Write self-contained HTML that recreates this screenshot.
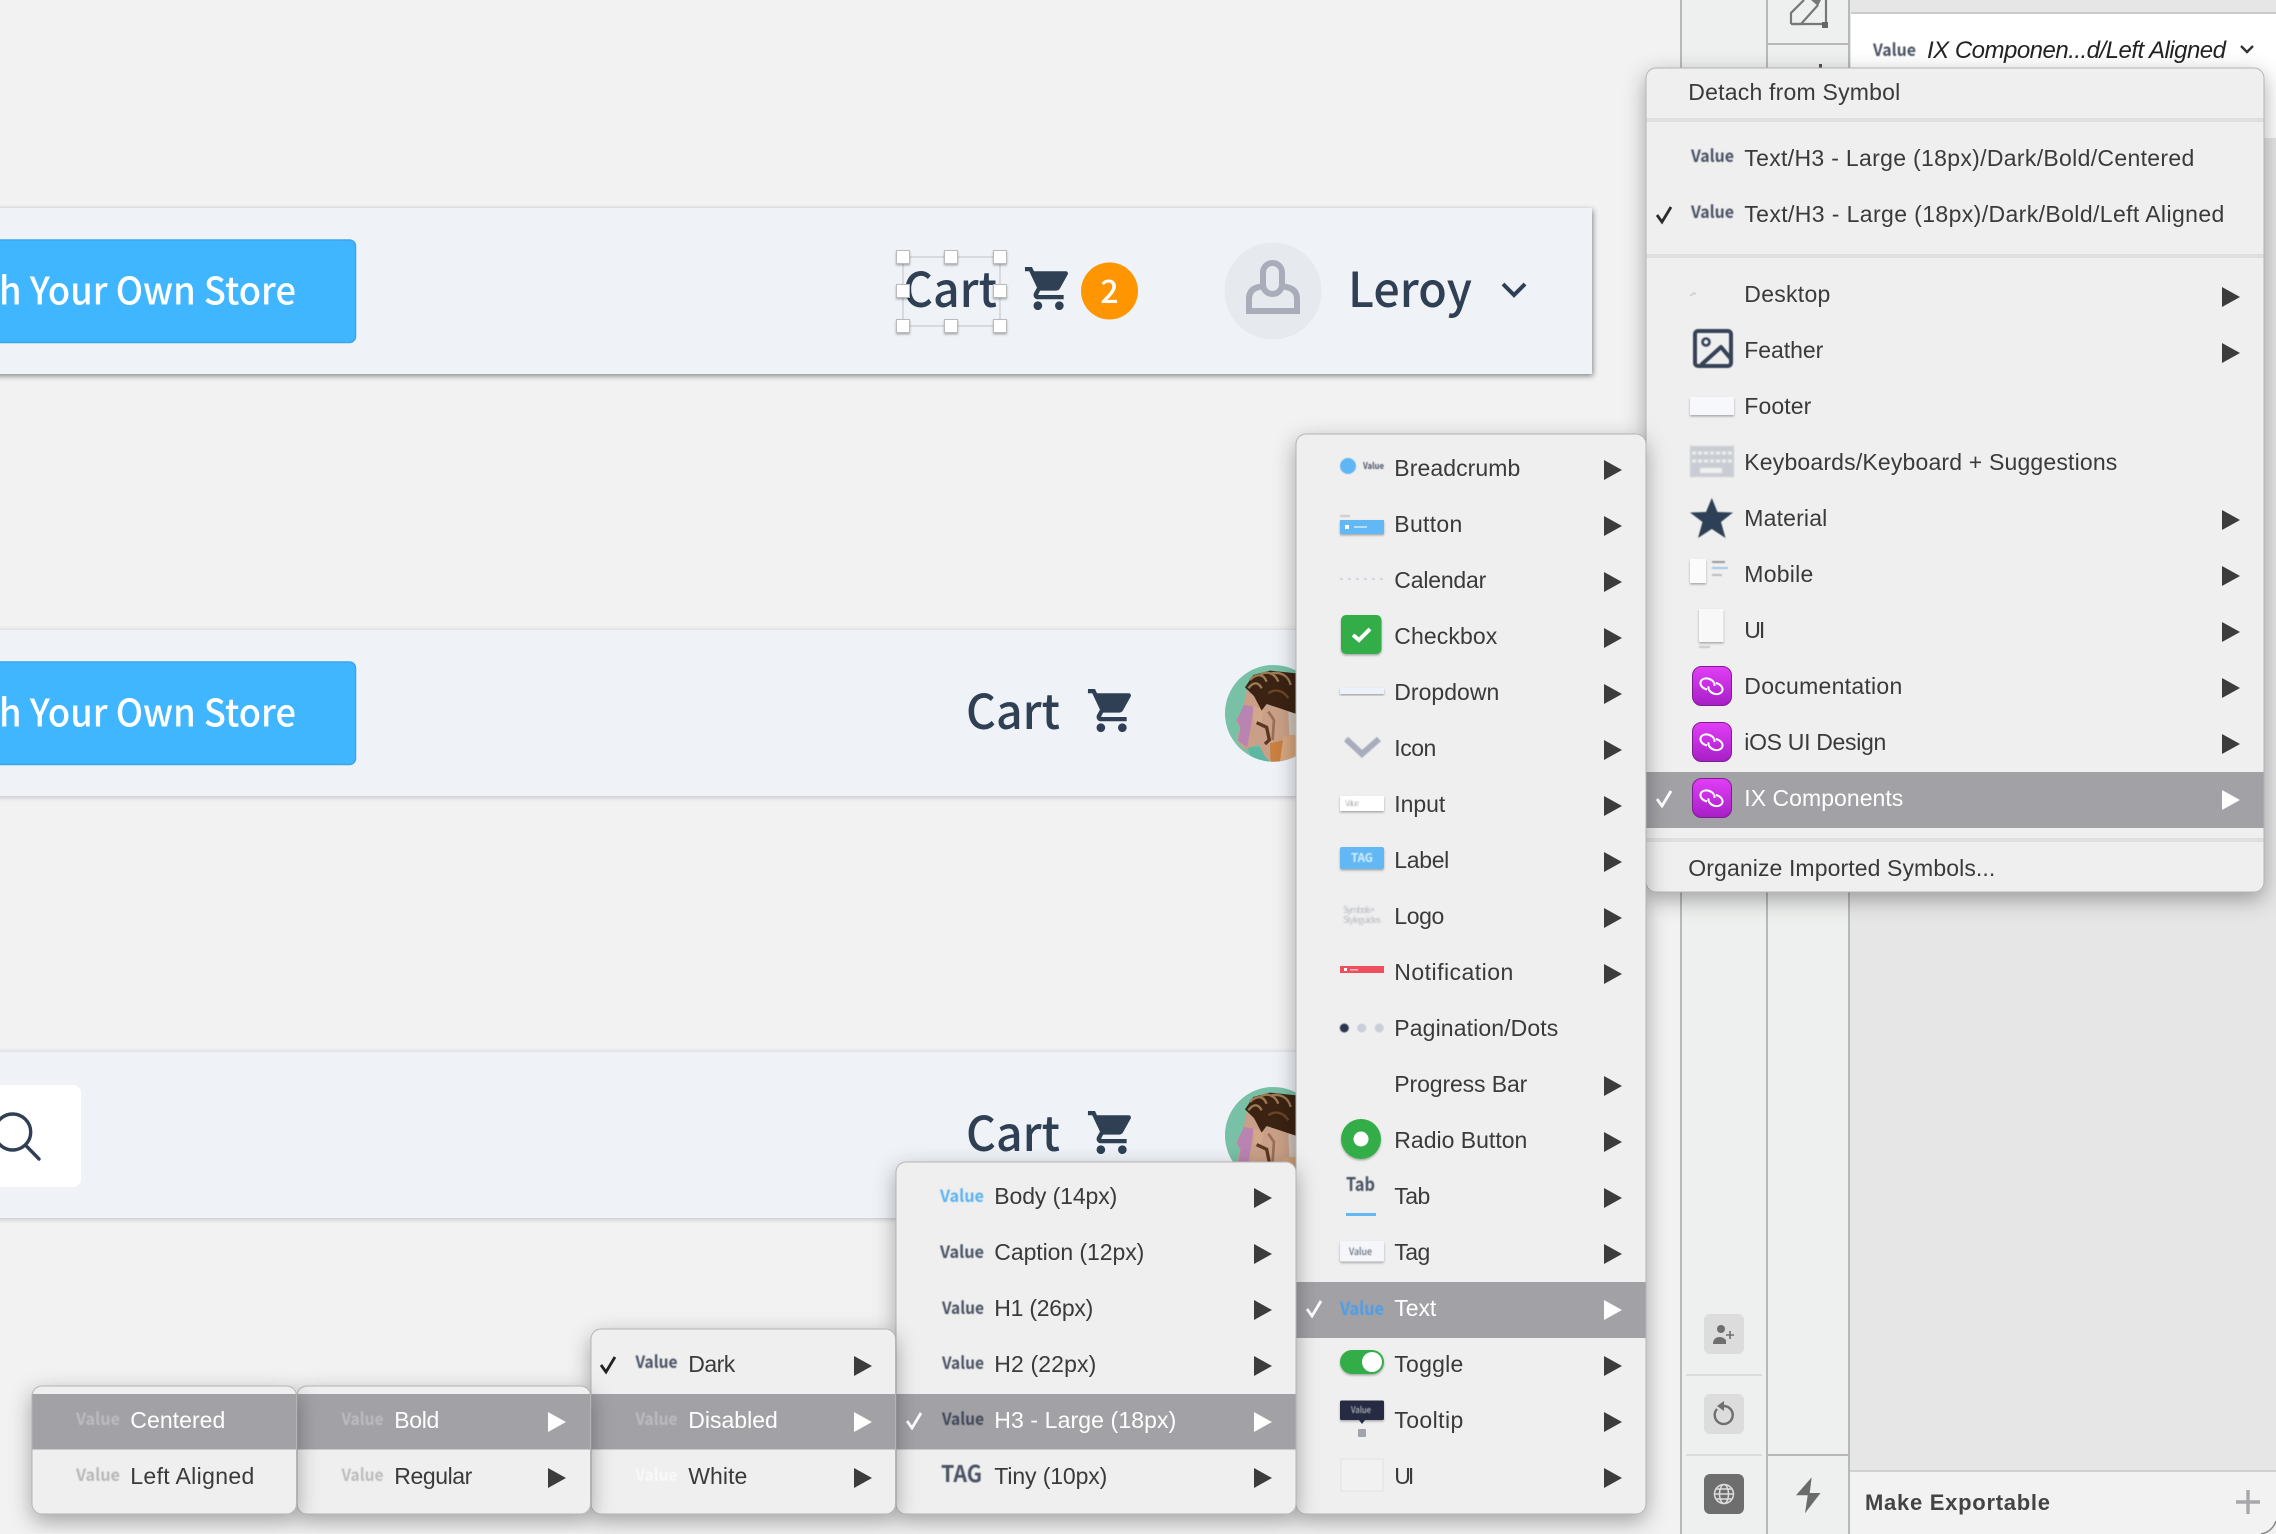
<!DOCTYPE html>
<html lang="en"><head><meta charset="utf-8"><title>Symbol override menus</title>
<style>
html,body{margin:0;padding:0;background:#f2f2f2;overflow:hidden}
svg{display:block}
.m{font:23px "Liberation Sans",sans-serif;fill:#3a3a3a;transform:translateX(-.7px)}
.w{fill:#fff}
.v{font:bold 17px "Noto Sans CJK SC","Liberation Sans",sans-serif;fill:#4a5264;filter:url(#bl)}
.n{font-family:"Noto Sans CJK SC","Liberation Sans",sans-serif;font-weight:500;fill:#2f3f54}
.t{fill:#3c3c3c}
</style></head><body>
<svg xmlns="http://www.w3.org/2000/svg" width="2276" height="1534" viewBox="0 0 2276 1534">
<defs>
<filter id="bl" x="-20%" y="-30%" width="140%" height="160%"><feGaussianBlur stdDeviation=".6"/></filter>
<filter id="bl2" x="-20%" y="-40%" width="140%" height="180%"><feGaussianBlur stdDeviation=".9"/></filter>
<filter id="bl3" x="-5%" y="-5%" width="110%" height="110%"><feGaussianBlur stdDeviation="3"/></filter>
<filter id="ms" x="-15%" y="-15%" width="130%" height="130%"><feDropShadow dx="0" dy="7" stdDeviation="11" flood-color="#000" flood-opacity=".33"/></filter>
<filter id="bs1" x="-2%" y="-10%" width="104%" height="125%"><feDropShadow dx="1" dy="2" stdDeviation="3" flood-color="#000" flood-opacity=".45"/></filter>
<filter id="bs2" x="-2%" y="-10%" width="104%" height="125%"><feDropShadow dx="0" dy="1" stdDeviation="3" flood-color="#000" flood-opacity=".22"/></filter>
<filter id="is" x="-20%" y="-20%" width="140%" height="150%"><feDropShadow dx="0" dy="1.5" stdDeviation="1" flood-color="#000" flood-opacity=".3"/></filter>
<linearGradient id="pg" x1="0" y1="0" x2="0" y2="1"><stop offset="0" stop-color="#e23ef6"/><stop offset="1" stop-color="#a61fc6"/></linearGradient>
<polygon id="a" points="0,-10 18,0 0,10"/>
<path id="cart" d="M7 18c-1.1 0-1.99.9-1.99 2S5.9 22 7 22s2-.9 2-2-.9-2-2-2zM1 2v2h2l3.6 7.59-1.35 2.45c-.16.28-.25.61-.25.96 0 1.1.9 2 2 2h12v-2H7.42c-.14 0-.25-.11-.25-.25l.03-.12.9-1.63h7.45c.75 0 1.41-.41 1.75-1.03l3.58-6.49c.08-.14.12-.31.12-.48 0-.55-.45-1-1-1H5.21l-.94-2H1zm16 16c-1.1 0-1.99.9-1.99 2s.89 2 1.99 2 2-.9 2-2-.9-2-2-2z"/>
<g id="run"><rect x=".5" y=".5" width="39" height="39" rx="9" fill="url(#pg)" stroke="#7d1c93"/>
<g fill="none" stroke="#fff" stroke-width="2"><ellipse cx="15.5" cy="18" rx="7.2" ry="5.4" transform="rotate(18 15.5 18)" pathLength="100" stroke-dasharray="78 22" stroke-dashoffset="-22"/><ellipse cx="23.5" cy="22.5" rx="7.2" ry="5.4" transform="rotate(18 23.5 22.5)" pathLength="100" stroke-dasharray="50 22 28 0"/></g></g>
<clipPath id="ac"><circle cx="1120" cy="220" r="145"/></clipPath>
<g id="av"><circle cx="1120" cy="220" r="145" fill="#78c0a6"/>
<g clip-path="url(#ac)">
<polygon points="1040,320 1060,365 1110,366 1090,320" fill="#5eb6a4"/>
<polygon points="1040,150 1030,200 1008,242 1020,262 1010,300 1035,330 1075,312 1095,350 1112,366 1270,366 1270,210 1100,195" fill="#c9a087"/>
<polygon points="1032,195 1060,200 1056,240 1042,322 1014,302 1022,262 1010,242" fill="#b983b2"/>
<polygon points="1060,200 1090,205 1085,245 1062,250" fill="#d3a78c"/>
<polygon points="1110,310 1150,300 1140,366 1112,366" fill="#c9803f"/>
<polygon points="1150,290 1187,280 1187,366 1140,366" fill="#d7a77f"/>
<path d="M1070 248L1100 262L1108 300L1095 312" fill="none" stroke="#5b3623" stroke-width="10"/>
<path d="M1105 215L1122 240L1118 300" fill="none" stroke="#9b6e52" stroke-width="8"/>
<polygon points="1165,215 1190,205 1190,285 1168,285" fill="#cfc6bb"/>
<polygon points="1035,142 1060,105 1110,92 1190,100 1190,222 1140,205 1100,192 1085,212 1062,168" fill="#3b2212"/>
<path d="M1050 120C1070 100 1090 100 1100 125M1080 105C1100 92 1125 98 1135 125M1115 100C1140 95 1165 105 1172 135M1045 145C1060 125 1075 125 1085 145" fill="none" stroke="#9c7a55" stroke-width="7"/>
<path d="M1105 160C1125 145 1150 150 1165 175" fill="none" stroke="#6b452a" stroke-width="7"/>
</g></g>
</defs>

<rect width="2276" height="1534" fill="#f2f2f2"/>

<!-- right inspector behind menus -->
<rect x="1681" y="0" width="168" height="1534" fill="#eef0ef"/>
<rect x="1849" y="0" width="427" height="1534" fill="#e6e6e6"/>
<rect x="1680" y="0" width="2" height="1534" fill="#b8b8b8"/>
<rect x="1766" y="0" width="2" height="1534" fill="#b8b8b8"/>
<rect x="1848" y="0" width="2" height="1534" fill="#b8b8b8"/>
<rect x="1768" y="43" width="80" height="2" fill="#b8b8b8"/>
<rect x="1851" y="14" width="425" height="124" fill="#fff"/>
<rect x="1851" y="12" width="425" height="2" fill="#cbcbcb"/>
<g fill="none" stroke="#777" stroke-width="2.2"><path d="M1826 0V24H1793"/><path d="M1791 24V13L1804 0M1791 24H1801L1818 5"/></g>
<rect x="1822" y="22" width="6" height="6" fill="#666"/><polygon points="1811,0 1821,0 1818,6" fill="#777"/>
<rect x="1819" y="64" width="3" height="4" fill="#555"/>
<text x="1873" y="56" class="v" textLength="43" lengthAdjust="spacingAndGlyphs">Value</text>
<text x="1927" y="58" style="font:italic 24px 'Liberation Sans',sans-serif;fill:#222" textLength="299">IX Componen...d/Left Aligned</text>
<path d="M2241 46l6 6 6-6" fill="none" stroke="#333" stroke-width="2.4"/>

<rect x="1704" y="1314" width="40" height="40" rx="6" fill="#dcdcdc"/>
<circle cx="1721" cy="1329" r="4" fill="#6f6f6f"/><path d="M1713 1344c0-5 3-7 7-7 2 0 4 1 6 3v4z" fill="#6f6f6f"/><path d="M1730 1331v8M1726 1335h8" stroke="#6f6f6f" stroke-width="1.6"/>
<rect x="1704" y="1394" width="40" height="40" rx="6" fill="#dcdcdc"/>
<path d="M1717 1409a9 9 0 1 0 7-3" fill="none" stroke="#6f6f6f" stroke-width="2.4"/><polygon points="1724,1401 1724,1411 1717,1406" fill="#6f6f6f"/>
<rect x="1704" y="1474" width="40" height="40" rx="6" fill="#6e6e6e"/>
<g fill="none" stroke="#ddd" stroke-width="1.5"><circle cx="1724" cy="1494" r="9.5"/><ellipse cx="1724" cy="1494" rx="4.5" ry="9.5"/><path d="M1714.5 1494h19M1716 1489h16M1716 1499h16"/></g>
<rect x="1686" y="1374" width="76" height="2" fill="#dcdcdc"/><rect x="1686" y="1454" width="76" height="2" fill="#dcdcdc"/>
<rect x="1768" y="1454" width="80" height="2" fill="#b8b8b8"/>
<polygon points="1811.7,1477.4 1796,1495.3 1807.7,1495.3 1805,1513.3 1820.5,1493 1809.7,1493" fill="#6b6b6b"/>
<rect x="1850" y="1471" width="426" height="63" fill="#f2f2f2"/><rect x="1850" y="1470" width="426" height="2" fill="#d0d0d0"/>
<text x="1865" y="1510" style="font:bold 22px 'Liberation Sans',sans-serif;fill:#444" textLength="185">Make Exportable</text>
<path d="M2248 1490v24M2236 1502h24" stroke="#a8a8aa" stroke-width="3.4"/>
<path d="M2261 1534Q2272 1532 2276 1521" fill="none" stroke="#888" stroke-width="1.5"/>

<!-- band 1 -->
<rect x="-20" y="208" width="1612" height="166" fill="#eff3f8" filter="url(#bs1)"/>
<rect x="-20" y="240" width="375.5" height="102.5" rx="6" fill="#3fb6ff" stroke="#3aa6ea" stroke-width="1.5"/>
<text x="-1" y="304.5" class="n" style="font-size:38px;fill:#fff" textLength="297" lengthAdjust="spacingAndGlyphs">h Your Own Store</text>
<rect x="903" y="257" width="97" height="69" fill="none" stroke="#c9cbce" stroke-width="1.2"/>
<text x="903" y="307" class="n" style="font-size:48px" textLength="94" lengthAdjust="spacingAndGlyphs">Cart</text>
<g fill="#fff" stroke="#bbb" stroke-width="1" filter="url(#is)">
<rect x="896.5" y="250.5" width="13" height="13"/><rect x="944.5" y="250.5" width="13" height="13"/><rect x="993.5" y="250.5" width="13" height="13"/>
<rect x="896.5" y="284.5" width="13" height="13"/><rect x="993.5" y="284.5" width="13" height="13"/>
<rect x="896.5" y="319.5" width="13" height="13"/><rect x="944.5" y="319.5" width="13" height="13"/><rect x="993.5" y="319.5" width="13" height="13"/></g>
<use href="#cart" transform="translate(1022.8 262.7) scale(2.15)" fill="#2f3f54"/>
<circle cx="1109.5" cy="291" r="28.5" fill="#ff9500"/>
<text x="1109.5" y="303" class="n" style="font-size:32px;fill:#fff" text-anchor="middle">2</text>
<circle cx="1273" cy="291" r="48.5" fill="#e6e9ee"/>
<g fill="none" stroke="#a9adb9" stroke-width="6"><rect x="1263" y="263" width="19" height="31" rx="9.5"/><path d="M1263 286L1259 287Q1249 289 1249 299V311H1297V299Q1297 289 1286 287L1282 286"/></g>
<text x="1348" y="307" class="n" style="font-size:48px" textLength="124" lengthAdjust="spacingAndGlyphs">Leroy</text>
<path d="M1503 284l11 11 11-11" fill="none" stroke="#2f3f54" stroke-width="4"/>

<!-- band 2 -->
<rect x="-20" y="630" width="1500" height="166" fill="#eff3f8" filter="url(#bs2)"/>
<rect x="-20" y="662" width="375.5" height="102.5" rx="6" fill="#3fb6ff" stroke="#3aa6ea" stroke-width="1.5"/>
<text x="-1" y="726.5" class="n" style="font-size:38px;fill:#fff" textLength="297" lengthAdjust="spacingAndGlyphs">h Your Own Store</text>
<text x="966" y="729" class="n" style="font-size:48px" textLength="94" lengthAdjust="spacingAndGlyphs">Cart</text>
<use href="#cart" transform="translate(1085.8 684.7) scale(2.15)" fill="#2f3f54"/>
<use href="#av" transform="translate(900 640) scale(.3333)"/>

<!-- band 3 -->
<rect x="-20" y="1052" width="1500" height="166" fill="#eff3f8" filter="url(#bs2)"/>
<rect x="-20" y="1085" width="101" height="102" rx="8" fill="#fff"/>
<circle cx="12.7" cy="1132" r="18" fill="none" stroke="#2f3f54" stroke-width="3.4"/>
<path d="M26 1145.7L39 1159" stroke="#2f3f54" stroke-width="3.4" stroke-linecap="round"/>
<text x="966" y="1151" class="n" style="font-size:48px" textLength="94" lengthAdjust="spacingAndGlyphs">Cart</text>
<use href="#cart" transform="translate(1085.8 1106.7) scale(2.15)" fill="#2f3f54"/>
<use href="#av" transform="translate(900 1062) scale(.3333)"/>

<!-- MENU 1 -->
<rect x="1646" y="68" width="618" height="824" rx="10" fill="#efefef" stroke="#b4b4b4" stroke-width="1" filter="url(#ms)"/>
<rect x="1646.5" y="118" width="617" height="4" fill="#dedede"/>
<rect x="1646.5" y="254" width="617" height="4" fill="#dedede"/>
<rect x="1646.5" y="838" width="617" height="4" fill="#dedede"/>
<rect x="1646.5" y="772" width="617" height="56" fill="#a2a1a6"/>
<text x="1689" y="100" class="m" textLength="212">Detach from Symbol</text>
<text x="1691" y="162" class="v" textLength="43" lengthAdjust="spacingAndGlyphs">Value</text>
<text x="1745" y="166" class="m" textLength="450">Text/H3 - Large (18px)/Dark/Bold/Centered</text>
<path d="M1657 215l5 7 9-15" fill="none" stroke="#2b2b2b" stroke-width="2.8"/>
<text x="1691" y="218" class="v" textLength="43" lengthAdjust="spacingAndGlyphs">Value</text>
<text x="1745" y="222" class="m" textLength="480">Text/H3 - Large (18px)/Dark/Bold/Left Aligned</text>

<path d="M1690 296l4-3 2 1" fill="none" stroke="#ccc" stroke-width="1.5"/>
<text x="1745" y="302" class="m" textLength="86">Desktop</text><use href="#a" x="2222" y="297" class="t"/>
<g fill="none" stroke="#354255" stroke-width="4" stroke-linejoin="round" filter="url(#bl)"><rect x="1695" y="331" width="36" height="35" rx="3"/><path d="M1701 365L1721 347L1731 359"/><circle cx="1706" cy="342" r="3.5" stroke-width="2.6"/></g>
<text x="1745" y="358" class="m" textLength="79">Feather</text><use href="#a" x="2222" y="353" class="t"/>
<rect x="1690" y="397" width="44" height="18" fill="#f7f8fb" filter="url(#is)"/>
<text x="1745" y="414" class="m" textLength="67">Footer</text>
<g filter="url(#bl2)"><rect x="1690" y="446" width="44" height="31" fill="#c9cdd3"/><path d="M1692 453h40M1692 461h40" stroke="#eceef1" stroke-width="3" stroke-dasharray="4 2"/><rect x="1700" y="468" width="22" height="5" fill="#eef0f2"/></g>
<text x="1745" y="470" class="m" textLength="373">Keyboards/Keyboard + Suggestions</text>
<polygon points="1711.8,498 1717.5,512 1733,512.5 1721,522 1725.5,538 1711.8,529 1698,538 1702.5,522 1690,512.5 1706,512" fill="#2f3f54" filter="url(#bl)"/>
<text x="1745" y="526" class="m" textLength="83">Material</text><use href="#a" x="2222" y="520" class="t"/>
<rect x="1690" y="559" width="16" height="24" fill="#fbfbfb" filter="url(#is)"/><g filter="url(#bl)"><rect x="1712" y="561" width="13" height="2" fill="#999"/><rect x="1712" y="567" width="16" height="2" fill="#9cc8ea"/><rect x="1712" y="574" width="10" height="2" fill="#bbb"/></g>
<text x="1745" y="582" class="m" textLength="69">Mobile</text><use href="#a" x="2222" y="576" class="t"/>
<rect x="1699" y="609" width="24.5" height="33" fill="#f8f8f8" filter="url(#is)"/><rect x="1699" y="646" width="11" height="2" fill="#c8c8c8" filter="url(#bl)"/>
<text x="1745" y="638" class="m" textLength="21">UI</text><use href="#a" x="2222" y="632" class="t"/>
<use href="#run" x="1692" y="666"/>
<text x="1745" y="694" class="m" textLength="158">Documentation</text><use href="#a" x="2222" y="688" class="t"/>
<use href="#run" x="1692" y="722"/>
<text x="1745" y="750" class="m" textLength="142">iOS UI Design</text><use href="#a" x="2222" y="744" class="t"/>
<path d="M1657 799l5 7 9-15" fill="none" stroke="#fff" stroke-width="2.8"/>
<use href="#run" x="1692" y="778"/>
<text x="1745" y="806" class="m w" textLength="159">IX Components</text><use href="#a" x="2222" y="800" fill="#fff"/>
<text x="1689" y="876" class="m" textLength="307">Organize Imported Symbols...</text>

<!-- MENU 2 -->
<rect x="1296" y="434" width="350" height="1080" rx="10" fill="#efefef" stroke="#b4b4b4" stroke-width="1" filter="url(#ms)"/>
<rect x="1296.5" y="1282" width="349" height="56" fill="#a2a1a6"/>
<g class="t">
<use href="#a" x="1604" y="470"/><use href="#a" x="1604" y="526"/><use href="#a" x="1604" y="582"/><use href="#a" x="1604" y="638"/><use href="#a" x="1604" y="694"/><use href="#a" x="1604" y="750"/><use href="#a" x="1604" y="806"/><use href="#a" x="1604" y="862"/><use href="#a" x="1604" y="918"/><use href="#a" x="1604" y="974"/><use href="#a" x="1604" y="1086"/><use href="#a" x="1604" y="1142"/><use href="#a" x="1604" y="1198"/><use href="#a" x="1604" y="1254"/><use href="#a" x="1604" y="1366"/><use href="#a" x="1604" y="1422"/><use href="#a" x="1604" y="1478"/>
</g>
<use href="#a" x="1604" y="1310" fill="#fff"/>
<text x="1395" y="476" class="m" textLength="126">Breadcrumb</text>
<text x="1395" y="532" class="m" textLength="68">Button</text>
<text x="1395" y="588" class="m" textLength="92">Calendar</text>
<text x="1395" y="644" class="m" textLength="103">Checkbox</text>
<text x="1395" y="700" class="m" textLength="105">Dropdown</text>
<text x="1395" y="756" class="m" textLength="42">Icon</text>
<text x="1395" y="812" class="m" textLength="51">Input</text>
<text x="1395" y="868" class="m" textLength="55">Label</text>
<text x="1395" y="924" class="m" textLength="50">Logo</text>
<text x="1395" y="980" class="m" textLength="119">Notification</text>
<text x="1395" y="1036" class="m" textLength="164">Pagination/Dots</text>
<text x="1395" y="1092" class="m" textLength="133">Progress Bar</text>
<text x="1395" y="1148" class="m" textLength="133">Radio Button</text>
<text x="1395" y="1204" class="m" textLength="36">Tab</text>
<text x="1395" y="1260" class="m" textLength="36">Tag</text>
<text x="1395" y="1316" class="m w" textLength="42">Text</text>
<text x="1395" y="1372" class="m" textLength="69">Toggle</text>
<text x="1395" y="1428" class="m" textLength="69">Tooltip</text>
<text x="1395" y="1484" class="m" textLength="20">UI</text>

<circle cx="1348" cy="466" r="8" fill="#5fb6f4" filter="url(#bl)"/><text x="1363" y="469" class="v" style="font-size:9px" textLength="21" lengthAdjust="spacingAndGlyphs">Value</text>
<rect x="1340" y="515" width="10" height="2" fill="#c5c8ce" filter="url(#bl)"/><rect x="1340" y="520" width="44" height="14" fill="#62b8f5" filter="url(#is)"/><rect x="1345" y="525" width="4" height="4" fill="#fff"/><rect x="1354" y="526" width="13" height="2" fill="#b6dcf8"/>
<path d="M1340 579h44" stroke="#d5d8de" stroke-width="2" stroke-dasharray="3 5"/>
<rect x="1341" y="615" width="40.5" height="39" rx="5" fill="#30ad47" filter="url(#is)"/><path d="M1353 635l6 5 11-11" fill="none" stroke="#fff" stroke-width="4"/>
<rect x="1340" y="688" width="44" height="6" fill="#edf2f8" filter="url(#is)"/>
<path d="M1346 739l16 15 17-15" fill="none" stroke="#a9adbb" stroke-width="6" filter="url(#bl)"/>
<rect x="1340" y="796" width="44" height="15" fill="#fff" filter="url(#is)"/><text x="1345" y="806" class="v" style="font-size:8px;font-weight:400;fill:#bbb" textLength="14">Value</text>
<rect x="1340" y="847" width="44" height="22" rx="2" fill="#62b8f5" filter="url(#is)"/><text x="1351" y="862" class="v" style="font-size:12px;fill:#d9eefc" textLength="22" lengthAdjust="spacingAndGlyphs">TAG</text>
<text x="1343" y="913" class="v" style="font-size:9px;fill:#b9bcc2;font-weight:400;filter:url(#bl2)" textLength="32">Symbols +</text><text x="1343" y="923" class="v" style="font-size:9px;fill:#b9bcc2;font-weight:400;filter:url(#bl2)" textLength="38">Styleguides</text>
<rect x="1340" y="966" width="44" height="7" fill="#ef4f5c"/><rect x="1344" y="968" width="3" height="3" fill="#fff"/><rect x="1350" y="969" width="8" height="1.5" fill="#f8b8bd"/>
<g filter="url(#bl)"><circle cx="1344.3" cy="1028" r="4.5" fill="#2c3650"/><circle cx="1361.7" cy="1028" r="4.5" fill="#c9ced8"/><circle cx="1379.3" cy="1028" r="4.5" fill="#c9ced8"/></g>
<circle cx="1361" cy="1139" r="20" fill="#30ad47" filter="url(#is)"/><circle cx="1361" cy="1139" r="7.5" fill="#fff"/>
<text x="1346" y="1191" class="v" style="font-size:19px" textLength="29" lengthAdjust="spacingAndGlyphs">Tab</text><rect x="1346" y="1213" width="30" height="3" fill="#62b8f5"/>
<rect x="1340" y="1241" width="44" height="20.5" rx="2" fill="#f4f6fa" filter="url(#is)"/><text x="1349" y="1255" class="v" style="font-size:10px;font-weight:400" textLength="23" lengthAdjust="spacingAndGlyphs">Value</text>
<path d="M1307 1309l5 7 9-15" fill="none" stroke="#fff" stroke-width="2.8"/>
<text x="1340" y="1315" class="v" style="font-size:18px;fill:#4a9ee8" textLength="44" lengthAdjust="spacingAndGlyphs">Value</text>
<rect x="1340" y="1350" width="44" height="24" rx="12" fill="#30ad47" filter="url(#is)"/><circle cx="1372" cy="1362" r="10" fill="#fff"/>
<rect x="1340" y="1400.5" width="44" height="19.5" rx="1.5" fill="#252c42" filter="url(#is)"/><polygon points="1359,1420 1365,1420 1362,1424" fill="#252c42"/><text x="1351" y="1413" class="v" style="font-size:9px;fill:#d5d7dc;font-weight:400" textLength="20" lengthAdjust="spacingAndGlyphs">Value</text><rect x="1358" y="1429" width="8" height="8" rx="1" fill="#a0a4ae"/>
<rect x="1341" y="1459" width="42" height="32" fill="#f1f1f1" stroke="#e2e2e2"/>

<!-- MENU 3 -->
<rect x="896" y="1162" width="400" height="352" rx="10" fill="#efefef" stroke="#b4b4b4" stroke-width="1" filter="url(#ms)"/>
<rect x="896.5" y="1394" width="399" height="55.5" fill="#a2a1a6"/>
<text x="940" y="1202" class="v" style="fill:#5ab2f0" textLength="44" lengthAdjust="spacingAndGlyphs">Value</text>
<text x="995" y="1204" class="m" textLength="123">Body (14px)</text><use href="#a" x="1254" y="1198" class="t"/>
<text x="940" y="1258" class="v" textLength="44" lengthAdjust="spacingAndGlyphs">Value</text>
<text x="995" y="1260" class="m" textLength="150">Caption (12px)</text><use href="#a" x="1254" y="1254" class="t"/>
<text x="942" y="1314" class="v" textLength="42" lengthAdjust="spacingAndGlyphs">Value</text>
<text x="995" y="1316" class="m" textLength="99">H1 (26px)</text><use href="#a" x="1254" y="1310" class="t"/>
<text x="942" y="1369" class="v" textLength="42" lengthAdjust="spacingAndGlyphs">Value</text>
<text x="995" y="1372" class="m" textLength="102">H2 (22px)</text><use href="#a" x="1254" y="1366" class="t"/>
<path d="M907 1421l5 7 9-15" fill="none" stroke="#fff" stroke-width="2.8"/>
<text x="942" y="1425" class="v" style="fill:#3f4759" textLength="42" lengthAdjust="spacingAndGlyphs">Value</text>
<text x="995" y="1428" class="m w" textLength="182">H3 - Large (18px)</text><use href="#a" x="1254" y="1422" fill="#fff"/>
<text x="941" y="1482" class="v" style="font-size:23px" textLength="41" lengthAdjust="spacingAndGlyphs">TAG</text>
<text x="995" y="1484" class="m" textLength="113">Tiny (10px)</text><use href="#a" x="1254" y="1478" class="t"/>

<!-- MENU 4 -->
<rect x="591" y="1329" width="304.5" height="185" rx="10" fill="#efefef" stroke="#b4b4b4" stroke-width="1" filter="url(#ms)"/>
<rect x="591.5" y="1394" width="303.5" height="55.5" fill="#a2a1a6"/>
<path d="M601 1365l5 7 9-15" fill="none" stroke="#222" stroke-width="2.8"/>
<text x="635.5" y="1368" class="v" textLength="42" lengthAdjust="spacingAndGlyphs">Value</text>
<text x="689" y="1372" class="m" textLength="47">Dark</text><use href="#a" x="854" y="1366" class="t"/>
<text x="635.5" y="1425" class="v" style="fill:#bcbcc0" textLength="42" lengthAdjust="spacingAndGlyphs">Value</text>
<text x="689" y="1428" class="m w" textLength="89.5">Disabled</text><use href="#a" x="854" y="1422" fill="#fff"/>
<text x="635.5" y="1481" class="v" style="fill:#f9f9f9" textLength="42" lengthAdjust="spacingAndGlyphs">Value</text>
<text x="689" y="1484" class="m" textLength="59">White</text><use href="#a" x="854" y="1478" class="t"/>

<!-- MENU 5 -->
<rect x="297" y="1386" width="293.5" height="128" rx="10" fill="#efefef" stroke="#b4b4b4" stroke-width="1" filter="url(#ms)"/>
<rect x="297.5" y="1394" width="292.5" height="55.5" fill="#a2a1a6"/>
<text x="341.5" y="1425" class="v" style="fill:#bcbcc0" textLength="42" lengthAdjust="spacingAndGlyphs">Value</text>
<text x="395" y="1428" class="m w" textLength="45">Bold</text><use href="#a" x="548" y="1422" fill="#fff"/>
<text x="341.5" y="1481" class="v" style="fill:#bcbcbc" textLength="42" lengthAdjust="spacingAndGlyphs">Value</text>
<text x="395" y="1484" class="m" textLength="78">Regular</text><use href="#a" x="548" y="1478" class="t"/>

<!-- MENU 6 -->
<rect x="32" y="1386" width="264.5" height="128" rx="10" fill="#efefef" stroke="#b4b4b4" stroke-width="1" filter="url(#ms)"/>
<rect x="32.5" y="1394" width="263.5" height="55.5" fill="#a2a1a6"/>
<text x="76" y="1425" class="v" style="fill:#bcbcc0" textLength="44" lengthAdjust="spacingAndGlyphs">Value</text>
<text x="131" y="1428" class="m w" textLength="95">Centered</text>
<text x="76" y="1481" class="v" style="fill:#b8b8b8" textLength="44" lengthAdjust="spacingAndGlyphs">Value</text>
<text x="131" y="1484" class="m" textLength="124">Left Aligned</text>
</svg>
</body></html>
